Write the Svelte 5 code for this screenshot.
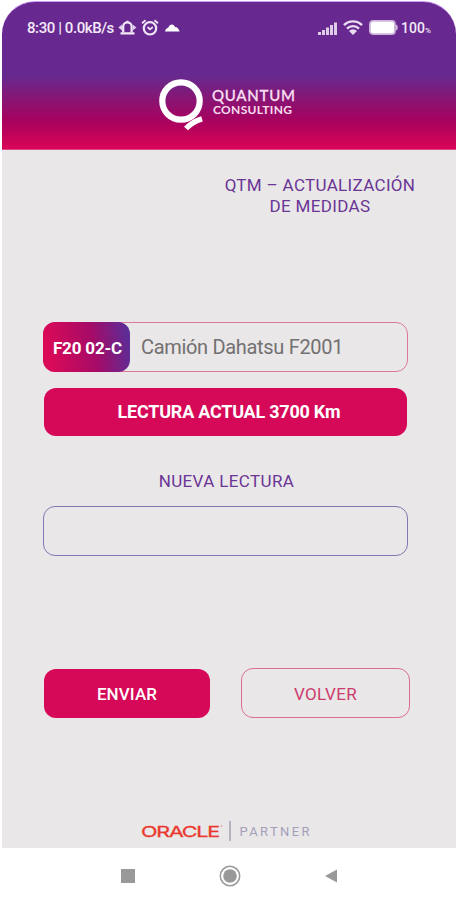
<script>
	let code = 'F20 02-C';
	let name = 'Camión Dahatsu F2001';
	let current = 3700;
	let reading = '';

	const bars = [3, 5, 7.5, 10, 12.5];

	function submit() {
		if (reading !== '') current = reading;
		reading = '';
	}

	function back() {
		reading = '';
	}
</script>

<div class="phone">
	<header>
		<div class="status">
			<span class="time">8:30 | 0.0kB/s</span>
			<svg class="bell" width="19" height="16" viewBox="0 0 19 16">
				<path d="M5.200 12.500V6.500a4.200 4.200 0 0 1 8.400 0v6" fill="none" stroke="#f3e9f8" stroke-width="2.200" />
				<path d="M2.500 13.300h14M9.400 .8v2" stroke="#f3e9f8" stroke-width="2.200" />
				<path d="M4 4.500L.3 7.500 4 10.500zM14.700 4.500l3.700 3-3.700 3z" fill="#e3d0ed" />
			</svg>
			<svg class="alarm" width="18" height="17" viewBox="0 0 18 17">
				<circle cx="9" cy="9.300" r="6.200" fill="none" stroke="#f0e5f6" stroke-width="2.200" />
				<path d="M1 4.300L4.500 1.300M17 4.300l-3.500-3" stroke="#f0e5f6" stroke-width="1.800" />
				<path d="M6.500 8L9 10.300 11.800 8" fill="none" stroke="#f0e5f6" stroke-width="1.700" />
			</svg>
			<svg class="cloud" width="15" height="8" viewBox="0 0 15 8">
				<path d="M0 7.500C.6 5 2 4 3.400 3.600 4.500-.2 8.600-.6 10 3c2.300 0 3.800 1.800 4.600 4.500z" fill="#fff" />
			</svg>

			<svg class="signal" width="20" height="13" viewBox="0 0 20 13">
				{#each bars as h, i}
					<rect x={i * 4} y={13 - h} width="3" height={h} fill="#dfcde8" />
				{/each}
			</svg>
			<svg class="wifi" width="20" height="15" viewBox="0 0 20 15">
				<g fill="none" stroke="#eadcf1" stroke-width="2.400">
					<path d="M1 5.200a12.500 12.500 0 0 1 18 0" />
					<path d="M4 8.600a8.500 8.500 0 0 1 12 0" />
				</g>
				<path d="M6 11a5.600 5.600 0 0 1 8 0l-4 3.900z" fill="#eadcf1" />
			</svg>
			<svg class="battery" width="29" height="15" viewBox="0 0 29 15">
				<rect x=".9" y=".9" width="25" height="13.200" rx="3" fill="#fff" stroke="#cdb5da" stroke-width="1.800" />
				<path d="M26.500 4.500q2.300 0 2.300 3t-2.300 3z" fill="#cdb5da" />
			</svg>
			<span class="percent">100<small>%</small></span>
		</div>

		<svg class="logo" width="138" height="56" viewBox="0 0 138 56">
			<circle cx="23" cy="22" r="18.700" fill="none" stroke="#fff" stroke-width="6.200" />
			<path d="M28 49.500Q34.500 42.500 44 39.800" fill="none" stroke="#fff" stroke-width="5.400" />
			<text class="brand" x="54" y="22" textLength="83">QUANTUM</text>
			<text class="sub" x="55" y="34.800" textLength="79">CONSULTING</text>
		</svg>
	</header>

	<main>
		<h1>QTM – ACTUALIZACIÓN<br />DE MEDIDAS</h1>

		<div class="item">
			<span class="code">{code}</span>
			<span class="name">{name}</span>
		</div>
		<div class="current">LECTURA ACTUAL {current} Km</div>

		<label for="reading">NUEVA LECTURA</label>
		<input id="reading" type="text" inputmode="numeric" bind:value={reading} />

		<div class="actions">
			<button class="send" on:click={submit}>ENVIAR</button>
			<button class="back" on:click={back}>VOLVER</button>
		</div>

		<div class="partner">
			<svg width="172" height="24" viewBox="0 0 172 24">
				<text class="oracle" x="0" y="17.500" textLength="78" lengthAdjust="spacingAndGlyphs">ORACLE</text>
				<circle cx="80.500" cy="7" r=".8" fill="#e8837c" />
				<path d="M89 2v20" stroke="#a5a0b6" stroke-width="1.500" />
				<text class="word" x="98.500" y="17" textLength="70">PARTNER</text>
			</svg>
		</div>
	</main>

	<nav>
		<svg width="14" height="14" viewBox="0 0 14 14"><rect width="14" height="14" fill="#999" /></svg>
		<svg width="22" height="22" viewBox="0 0 22 22">
			<circle cx="11" cy="11" r="9.700" fill="none" stroke="#999" stroke-width="1.500" />
			<circle cx="11" cy="11" r="6.800" fill="#999" />
		</svg>
		<svg width="12" height="14" viewBox="0 0 12 14"><path d="M0 7L12 .5v13z" fill="#999" /></svg>
	</nav>
</div>

<style>
	:global(body) {
		background: #fff;
	}

	.phone {
		box-sizing: border-box;
		width: 457px;
		height: 900px;
		padding: 1px 1px 0 2px;
		font-family: Roboto, sans-serif;
		display: flex;
		flex-direction: column;
		overflow: hidden;
	}

	header {
		box-sizing: border-box;
		height: 149px;
		flex: none;
		border-top: 1px solid #cf9af5;
		border-radius: 33px 33px 0 0;
		background: linear-gradient(#67298f 0, #67298f 74px, #861675 96px, #a6025f 118px, #d60557 145px, #d60557 147px, #e58bad 148px);
	}

	.status {
		display: flex;
		height: 51px;
		align-items: center;
		padding: 0 24px 0 25px;
		color: #f3e9f8;
	}

	.time {
		width: 88px;
		font-size: 15px;
		font-weight: 500;
		letter-spacing: -0.42px;
		white-space: nowrap;
	}

	.bell {
		margin-left: 3px;
	}

	.alarm {
		margin-left: 4px;
	}

	.cloud {
		margin-left: 6px;
	}

	.signal {
		margin-left: auto;
		margin-top: 1px;
	}

	.wifi {
		margin-left: 5px;
	}

	.battery {
		margin-left: 6px;
	}

	.percent {
		width: 31px;
		margin-left: 3px;
		font-size: 14px;
		font-weight: 500;
		white-space: nowrap;
	}

	.percent small {
		font-size: 8px;
	}

	.logo {
		display: block;
		margin: 26px 0 0 156px;
	}

	.brand {
		font: 500 15px Lato, sans-serif;
		fill: #f7dff0;
		stroke: #f7dff0;
		stroke-width: 0.3px;
	}

	.sub {
		font: 700 12px Lato, sans-serif;
		fill: #f7dff0;
	}

	main {
		box-sizing: border-box;
		height: 698px;
		flex: none;
		padding: 25px 46px 0 41px;
		background: #e9e7e8;
		display: flex;
		flex-direction: column;
	}

	h1 {
		width: 200px;
		height: 42px;
		margin: 0 -10px 105px auto;
		font-size: 17px;
		font-weight: 400;
		line-height: 20.5px;
		letter-spacing: 0.33px;
		text-align: center;
		white-space: nowrap;
		color: #6a3595;
	}

	.item {
		box-sizing: border-box;
		height: 50px;
		width: 365px;
		border: 1px solid #dc7899;
		border-radius: 12px;
		display: flex;
		align-items: center;
	}

	.code {
		width: 87px;
		height: 50px;
		margin-left: -1px;
		border-radius: 12px;
		background: linear-gradient(80deg, #d90a58 10%, #a50b67 58%, #5d2c96 95%);
		color: #fff;
		font-size: 17px;
		font-weight: 700;
		letter-spacing: -0.15px;
		line-height: 52px;
		text-indent: 2px;
		text-align: center;
	}

	.name {
		margin-left: 11px;
		font-size: 20px;
		letter-spacing: -0.32px;
		color: #727071;
	}

	.current {
		width: 363px;
		height: 48px;
		margin: 16px 0 0 1px;
		border-radius: 12px;
		background: #d60858;
		color: #fff;
		font-size: 18px;
		font-weight: 700;
		letter-spacing: -0.23px;
		line-height: 48px;
		text-indent: 7px;
		text-align: center;
	}

	label {
		margin-top: 34px;
		font-size: 17px;
		line-height: 22px;
		letter-spacing: 0.38px;
		text-align: center;
		color: #6a3595;
	}

	input {
		box-sizing: border-box;
		width: 365px;
		height: 50px;
		margin: 14px 0 0;
		padding: 0 16px;
		border: 1px solid #8078b0;
		border-radius: 12px;
		background: transparent;
		font: 20px Roboto, sans-serif;
		color: #727071;
		outline: none;
	}

	.actions {
		display: flex;
		gap: 31px;
		margin-top: 112px;
	}

	button {
		box-sizing: border-box;
		height: 50px;
		padding: 1px 0 0;
		border-radius: 12px;
		font: 400 17px Roboto, sans-serif;
		letter-spacing: 0.3px;
		flex: none;
	}

	.send {
		width: 166px;
		height: 49px;
		margin: 1px 0 0 1px;
		border: 0;
		background: #d60858;
		color: #fff;
		font-weight: 500;
		letter-spacing: 0.1px;
	}

	.back {
		width: 169px;
		border: 1px solid #d9708f;
		background: transparent;
		color: #cc3c6c;
	}

	.partner {
		margin: 101px 0 0 98px;
	}

	.partner svg {
		display: block;
	}

	.oracle {
		font: 400 14.5px Inter, sans-serif;
		letter-spacing: -0.8px;
		fill: #e9392e;
		stroke: #e9392e;
		stroke-width: 0.3px;
	}

	.word {
		font: 400 13px Roboto, sans-serif;
		fill: #a59fba;
	}

	nav {
		box-sizing: border-box;
		height: 52px;
		flex: none;
		padding: 3px 119px 0;
		display: flex;
		align-items: center;
		justify-content: space-between;
	}
</style>
